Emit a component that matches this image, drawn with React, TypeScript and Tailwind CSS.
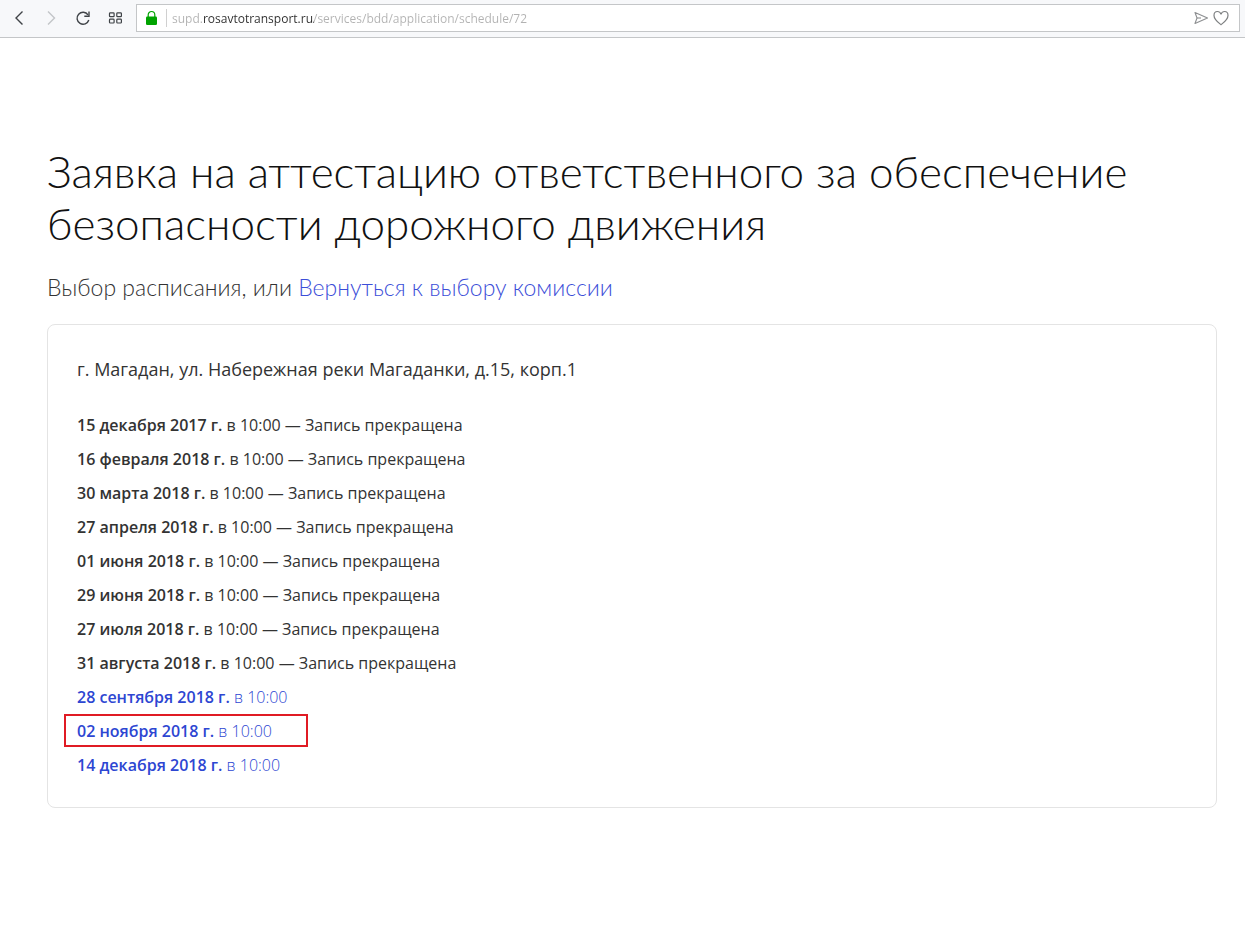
import React from "react";

type Slot = { date: string; open?: boolean; marked?: boolean };

const slots: Slot[] = [
  { date: "15 декабря 2017 г." },
  { date: "16 февраля 2018 г." },
  { date: "30 марта 2018 г." },
  { date: "27 апреля 2018 г." },
  { date: "01 июня 2018 г." },
  { date: "29 июня 2018 г." },
  { date: "27 июля 2018 г." },
  { date: "31 августа 2018 г." },
  { date: "28 сентября 2018 г.", open: true },
  { date: "02 ноября 2018 г.", open: true, marked: true },
  { date: "14 декабря 2018 г.", open: true },
];

function BrowserBar() {
  return (
    <header className="flex h-[38px] items-center border-b border-[#c4c6c8] bg-[#f7f8fa] pr-[5px] pb-px pl-[3px]">
      <nav className="flex shrink-0 items-center text-[#3f4347]" aria-label="Навигация">
        <button type="button" aria-label="Назад" className="flex w-8 justify-center">
          <svg width="16" height="16" viewBox="0 0 16 16" fill="none" stroke="currentColor" strokeWidth="1.4">
            <path d="M11.500 1.500 5 8l6.500 6.500" />
          </svg>
        </button>
        <button type="button" aria-label="Вперёд" disabled className="flex w-8 justify-center text-[#c3c5c8]">
          <svg width="16" height="16" viewBox="0 0 16 16" fill="none" stroke="currentColor" strokeWidth="1.4">
            <path d="m5 1.500 6.500 6.500L5 14.500" />
          </svg>
        </button>
        <button type="button" aria-label="Обновить" className="flex w-8 justify-center">
          <svg width="16" height="16" viewBox="0 0 16 16" fill="none" stroke="currentColor" strokeWidth="1.4">
            <path d="M13 4.8A6 6 0 1 0 13.8 10" />
            <path d="M14 1.5v4.8H9.3" />
          </svg>
        </button>
        <button type="button" aria-label="Экспресс-панель" className="flex w-8 justify-center">
          <svg width="16" height="16" viewBox="0 0 16 16" fill="none" stroke="currentColor" strokeWidth="1.2">
            <rect x="2.500" y="2.800" width="4.6" height="3.9" rx="0.8" />
            <rect x="9.800" y="2.800" width="4.6" height="3.9" rx="0.8" />
            <rect x="2.500" y="9.1" width="4.6" height="3.9" rx="0.8" />
            <rect x="9.800" y="9.1" width="4.6" height="3.9" rx="0.8" />
          </svg>
        </button>
      </nav>
      <div className="ml-[5px] flex h-7 min-w-0 flex-1 items-center border border-[#c4c6c8] bg-white pr-[10px] pl-2">
        <svg width="14" height="16" viewBox="0 0 14 16" className="shrink-0" aria-hidden="true">
          <rect x="1" y="6.5" width="11" height="8.5" rx="1.2" fill="#00a300" />
          <path d="M3.2 7V4.8a3.3 3.3 0 0 1 6.6 0V7" fill="none" stroke="#00a300" strokeWidth="1.2" />
        </svg>
        <span className="ml-[7px] h-[18px] w-px shrink-0 bg-[#d0d0d0]" />
        <input
          type="text"
          aria-label="Адрес страницы"
          defaultValue="supd.rosavtotransport.ru/services/bdd/application/schedule/72"
          className="ml-[5px] min-w-0 flex-1 bg-[linear-gradient(to_right,#b2b2b2_32px,#2e2e2e_32px,#2e2e2e_142px,#b2b2b2_142px)] bg-clip-text pt-0.5 text-[12px] leading-5 text-transparent outline-none"
        />
        <button type="button" aria-label="Отправить" className="shrink-0 text-[#8d8f91]">
          <svg width="16" height="16" viewBox="0 0 16 16" fill="none" stroke="currentColor" strokeWidth="1.1" strokeLinejoin="round">
            <path d="M2 2.500l12.500 5.500L2 13.500l2-5.500z" />
            <path d="M4 8h4" />
          </svg>
        </button>
        <button type="button" aria-label="В избранное" className="ml-1 shrink-0 text-[#7d7f81]">
          <svg width="16" height="16" viewBox="0 0 16 16" fill="none" stroke="currentColor" strokeWidth="1.2" strokeLinejoin="round">
            <path d="M8 14.7C6.2 13.2 1 9.6 1 5.4 1 3 2.6 1.5 4.4 1.5 6.1 1.5 7.4 2.600 8 4.100 8.600 2.600 9.900 1.500 11.600 1.500 13.400 1.500 15 3 15 5.400 15 9.600 9.800 13.200 8 14.700z" />
          </svg>
        </button>
      </div>
    </header>
  );
}

function SlotRow({ slot }: { slot: Slot }) {
  return (
    <li className="relative flex">
      {slot.open ? (
        <a href="#slot" className="font-light text-[#2d46d2]">
          <b className="font-semibold">{slot.date}</b> в 10:00
        </a>
      ) : (
        <p>
          <b className="font-semibold">{slot.date}</b> в 10:00 — Запись прекращена
        </p>
      )}
      {slot.marked && (
        <span className="pointer-events-none absolute top-0 -left-[13px] h-[33px] w-[244px] border-2 border-[#e01b24]" />
      )}
    </li>
  );
}

export default function App() {
  return (
    <div className="min-h-screen bg-white font-['Open_Sans',sans-serif] text-[#333]">
      <BrowserBar />
      <main className="pt-[107px] pr-7 pb-16 pl-[47px]">
        <h1 className="font-['Lato',sans-serif] text-[44px] leading-[52px] font-light text-[#111]">
          Заявка на аттестацию ответственного за обеспечение безопасности дорожного движения
        </h1>
        <h2 className="mt-6 font-['Lato',sans-serif] text-[23px] leading-7 font-light">
          Выбор расписания, или{" "}
          <a href="#commission" className="text-[#3c4ed8]">
            Вернуться к выбору комиссии
          </a>
        </h2>
        <section className="mt-[23px] rounded-lg border border-[#e4e4e4] px-[29px] pt-[30px] pb-[25px]">
          <h3 className="text-[18px] leading-7">г. Магадан, ул. Набережная реки Магаданки, д.15, корп.1</h3>
          <ul className="mt-[25px] text-[16px] leading-[34px]">
            {slots.map((slot) => (
              <SlotRow key={slot.date} slot={slot} />
            ))}
          </ul>
        </section>
      </main>
    </div>
  );
}
